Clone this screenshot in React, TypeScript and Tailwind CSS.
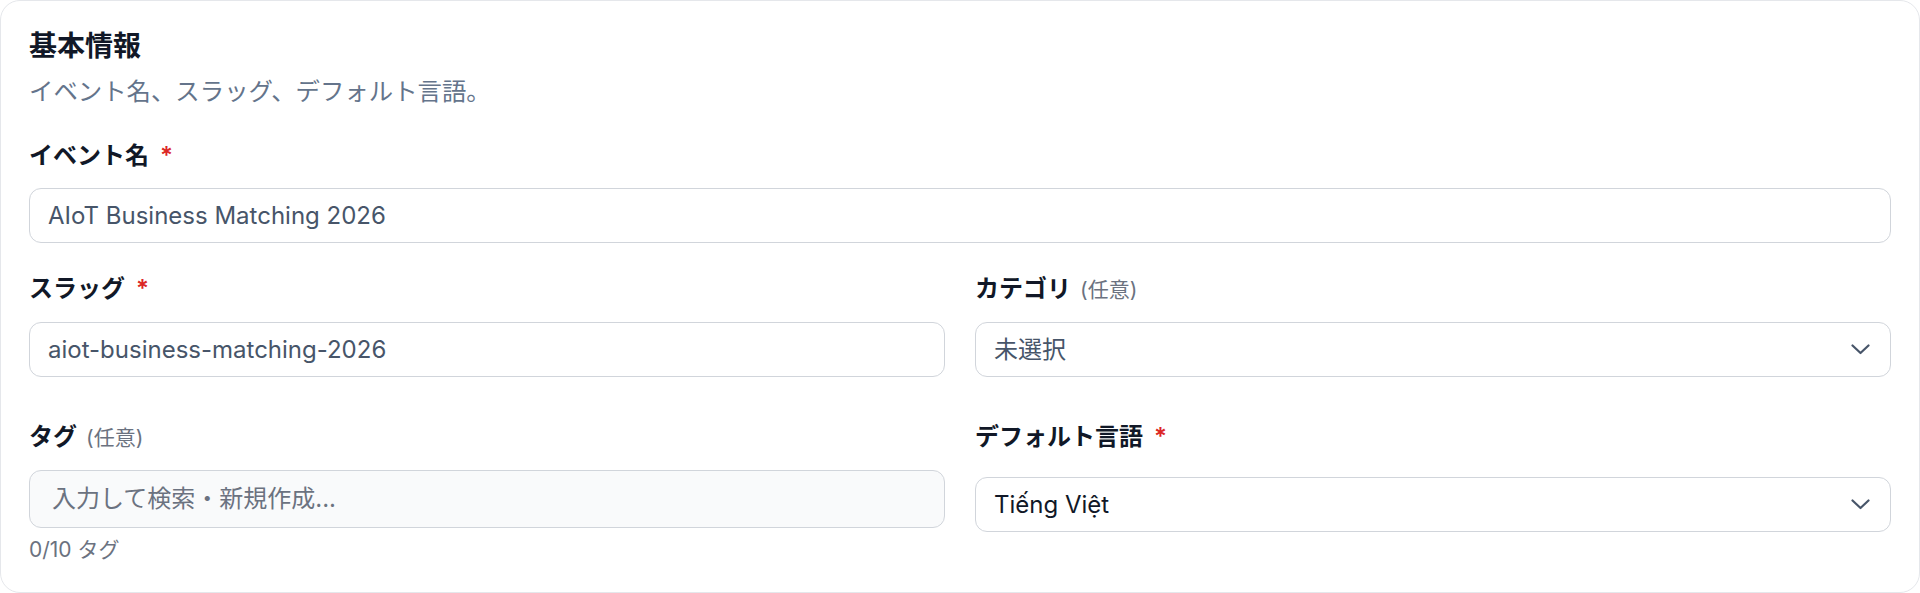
import React from "react";

const FONT = 'Inter, "Noto Sans CJK JP", sans-serif';

function Chevron() {
  return (
    <svg width="19" height="11" viewBox="0 0 19 11" fill="none" className="shrink-0">
      <path d="M1.5 1.5 L9.5 9 L17.5 1.5" stroke="#475569" strokeWidth="2.2" strokeLinecap="round" strokeLinejoin="round" />
    </svg>
  );
}

function Label({ text, required, optional }: { text: string; required?: boolean; optional?: boolean }) {
  return (
    <div className="flex items-baseline h-[36px] overflow-visible text-[24px] leading-[36px] font-semibold text-[#111827]">
      <span>{text}</span>
      {required && <span className="ml-[11px] text-[#dc2626]">*</span>}
      {optional && <span className="ml-[9px] text-[21px] leading-[36px] font-normal text-[#6b7280]">(任意)</span>}
    </div>
  );
}

export default function App() {
  return (
    <div className="w-[1920px] h-[593px] bg-white" style={{ fontFamily: FONT }}>
      <div className="h-[593px] rounded-[20px] border border-[#e5e7eb] bg-white pt-[25px] px-[28px]">
        <h2 className="text-[28px] leading-[40px] font-semibold text-[#111827]">基本情報</h2>
        <p className="mt-[7px] text-[24.4px] leading-[36px] text-[#64748b]">イベント名、スラッグ、デフォルト言語。</p>

        <div className="mt-[29px]">
          <Label text="イベント名" required />
          <div className="mt-[14px] h-[55px] rounded-[12px] border border-[#d1d5db] bg-white px-[18px] flex items-center text-[24px] text-[#475569]">
            AIoT Business Matching 2026
          </div>
        </div>

        <div className="mt-[28px] grid grid-cols-2 gap-x-[30px]">
          <div>
            <Label text="スラッグ" required />
            <div className="mt-[15px] h-[55px] rounded-[12px] border border-[#d1d5db] bg-white px-[18px] flex items-center text-[24px] text-[#475569]">
              aiot-business-matching-2026
            </div>
          </div>
          <div>
            <Label text="カテゴリ" optional />
            <div className="mt-[15px] h-[55px] rounded-[12px] border border-[#d1d5db] bg-white pl-[18px] pr-[20px] flex items-center justify-between text-[24px] text-[#475569]">
              <span>未選択</span>
              <Chevron />
            </div>
          </div>
        </div>

        <div className="mt-[42px] grid grid-cols-2 gap-x-[30px]">
          <div>
            <Label text="タグ" optional />
            <div className="mt-[15px] h-[58px] rounded-[12px] border border-[#d1d5db] bg-[#f9fafb] px-[22px] flex items-center text-[24px] text-[#6b7280]">
              入力して検索・新規作成...
            </div>
            <p className="mt-[8px] text-[21px] leading-[27px] text-[#6b7280]">0/10 タグ</p>
          </div>
          <div>
            <Label text="デフォルト言語" required />
            <div className="mt-[22px] h-[55px] rounded-[12px] border border-[#d1d5db] bg-white pl-[18px] pr-[20px] flex items-center justify-between text-[24px] text-[#111827]">
              <span>Tiếng Việt</span>
              <Chevron />
            </div>
          </div>
        </div>
      </div>
    </div>
  );
}
